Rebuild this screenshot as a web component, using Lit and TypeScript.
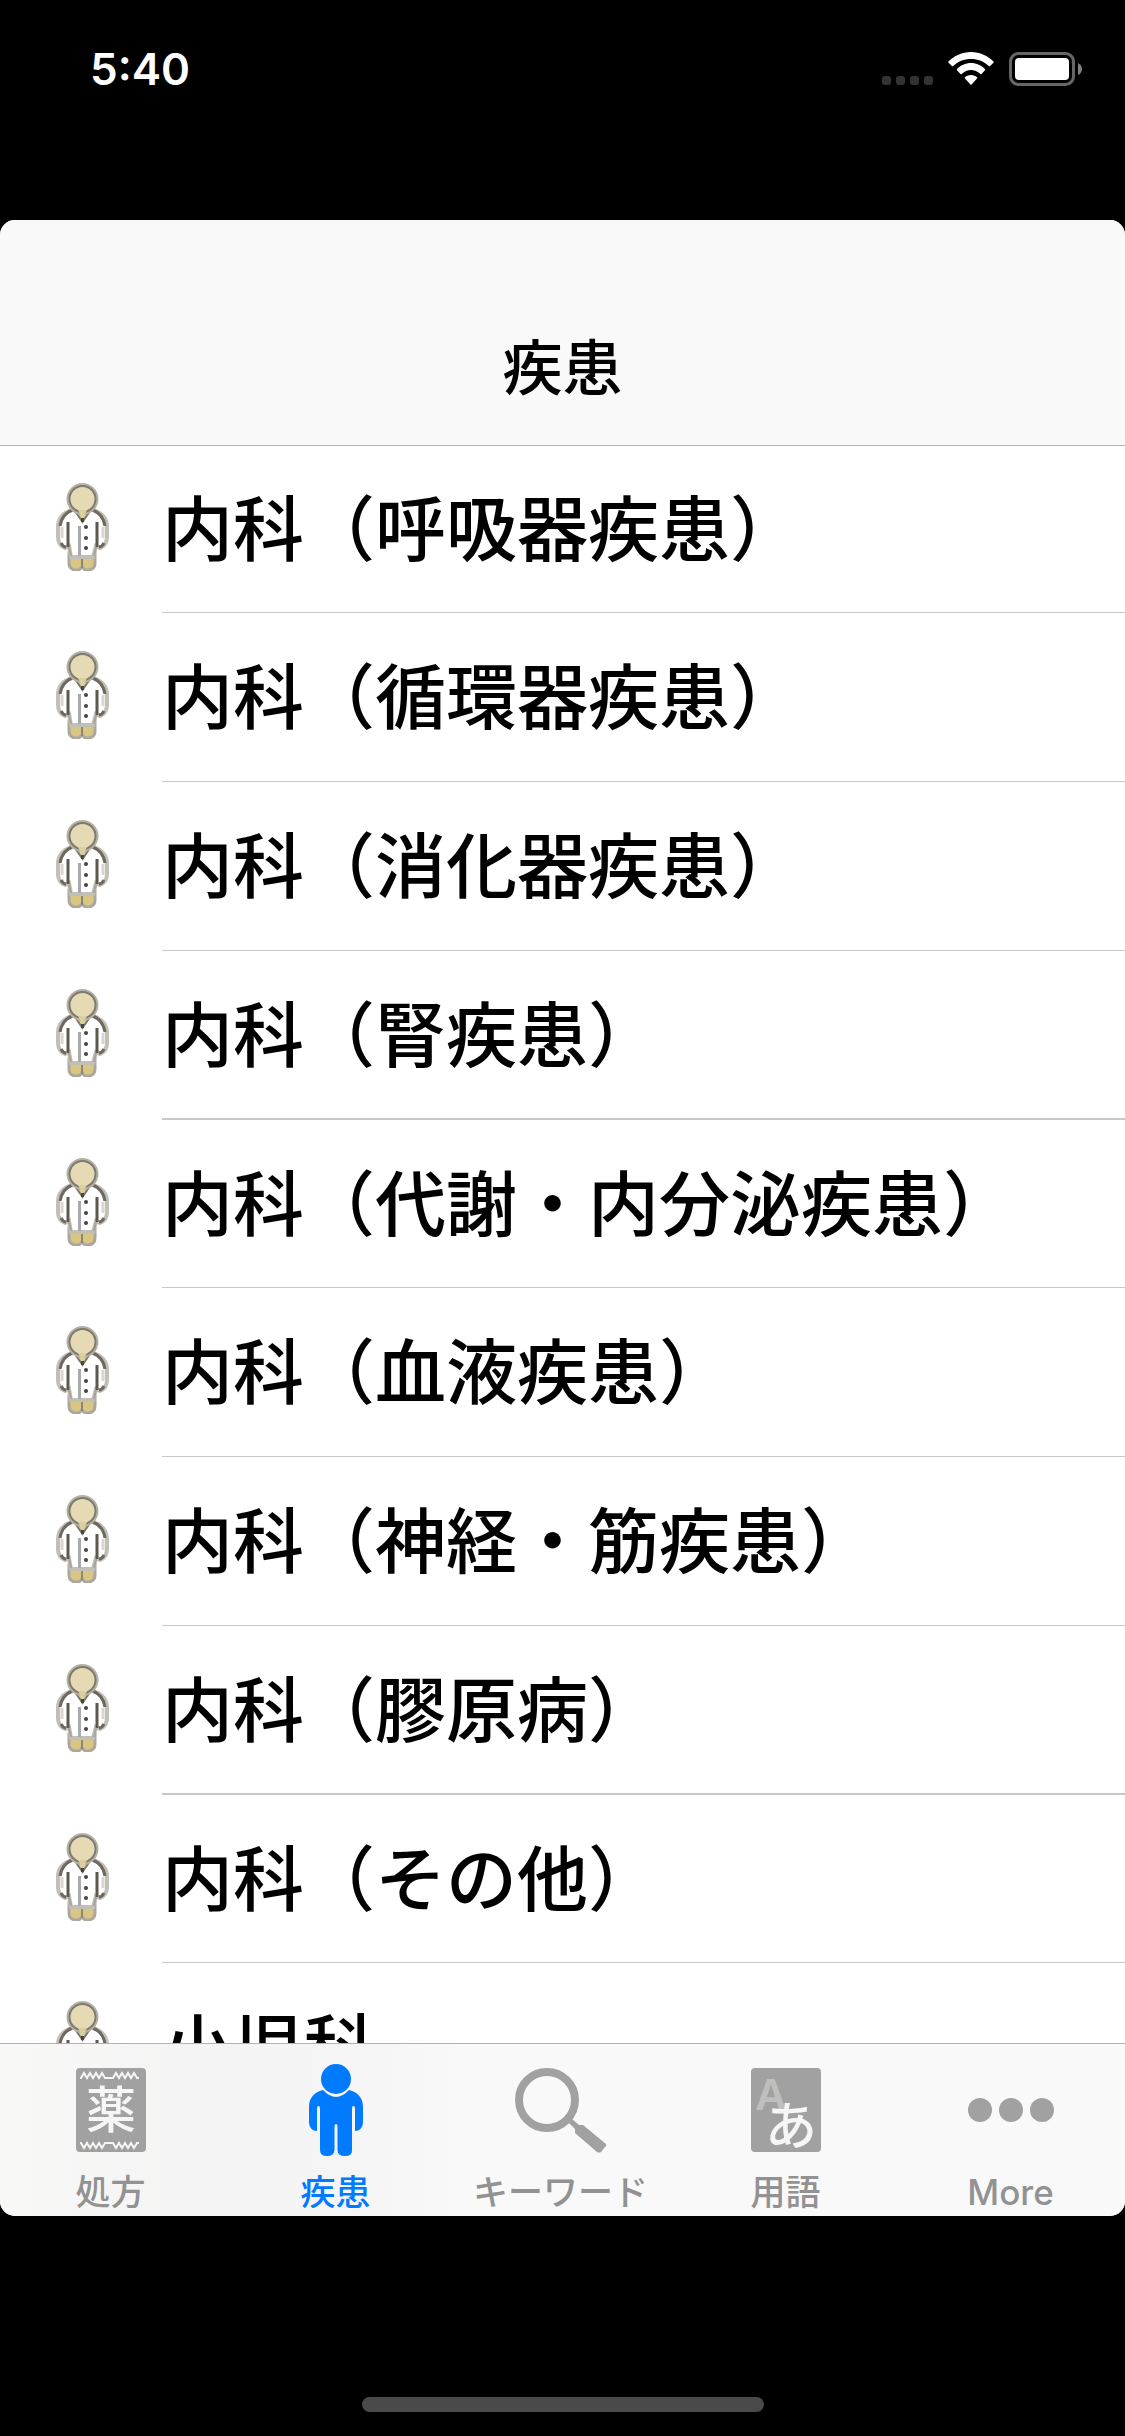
import { LitElement, css, html, svg } from 'lit'
import { customElement, property, state } from 'lit/decorators.js'
import { classMap } from 'lit/directives/class-map.js'

const categories = [
  '内科（呼吸器疾患）',
  '内科（循環器疾患）',
  '内科（消化器疾患）',
  '内科（腎疾患）',
  '内科（代謝・内分泌疾患）',
  '内科（血液疾患）',
  '内科（神経・筋疾患）',
  '内科（膠原病）',
  '内科（その他）',
  '小児科',
]

// woven edge of the medicine packet, mirrored at the bottom
const edge = (y: number, rise: number) => svg`
  <path d="M4 ${y}h1l3 ${rise} 3 ${-rise} 3 ${rise} 3 ${-rise} 3 ${rise} 3 ${-rise} 3 ${rise} 3 ${-rise}h8l3 ${rise} 3 ${-rise} 3 ${rise} 3 ${-rise} 3 ${rise} 3 ${-rise} 3 ${rise} 3 ${-rise}h2"
    fill="none" stroke="#f6f6f6" stroke-width="2"/>`

const tabs = [
  {
    id: 'prescription',
    label: '処方',
    icon: html`
      <svg class="art" width="70" height="84" viewBox="0 0 70 84" aria-hidden="true">
        <rect width="70" height="84" rx="4" fill="currentColor"/>
        ${edge(10, -5)}
        ${edge(75, 5)}
        <text x="35" y="60" class="glyph" font-size="50" text-anchor="middle">薬</text>
      </svg>`,
  },
  {
    id: 'disease',
    label: '疾患',
    icon: html`
      <svg class="art" width="54" height="92" viewBox="0 0 54 92" fill="currentColor" aria-hidden="true">
        <circle cx="27" cy="15" r="15"/>
        <path d="M14 26C5 28 0 34 0 43V58C0 63 3 67 8 67V44Q8 42 9.500 42T11 44V86Q11 92 18 92T25.500 86V63Q25.500 60 27 60T28.500 63V86Q28.500 92 36 92T43 86V44Q43 42 44.500 42T46 44V67C51 67 54 63 54 58V43C54 34 49 28 40 26Q27 40 14 26Z"/>
      </svg>`,
  },
  {
    id: 'keyword',
    label: 'キーワード',
    icon: html`
      <svg class="art" width="92" height="85" viewBox="0 0 92 85" aria-hidden="true">
        <circle cx="32" cy="32" r="28" fill="none" stroke="currentColor" stroke-width="8"/>
        <path d="M53 54L57 51L64 57H68L91 76Q92 78 90 79L86 84Q84 85 82 84L60 65V61Z" fill="currentColor"/>
      </svg>`,
  },
  {
    id: 'term',
    label: '用語',
    icon: html`
      <svg class="art" width="70" height="84" viewBox="0 0 70 84" aria-hidden="true">
        <rect width="70" height="84" rx="4" fill="currentColor"/>
        <text x="4" y="42" class="latin" font-size="44">A</text>
        <text x="40" y="77" class="glyph" font-size="52" text-anchor="middle">あ</text>
      </svg>`,
  },
  {
    id: 'more',
    label: 'More',
    icon: html`
      <svg class="art" width="86" height="84" viewBox="0 0 86 84" fill="currentColor" aria-hidden="true">
        <circle cx="12" cy="42" r="12"/>
        <circle cx="43" cy="42" r="12"/>
        <circle cx="74" cy="42" r="12"/>
      </svg>`,
  },
]

@customElement('status-bar')
export class StatusBar extends LitElement {

  static styles = css`
    :host {
      display: flex;
      justify-content: space-between;
      align-items: flex-start;
      height: 220px;
      padding: 40px 43px 0 90px;
      box-sizing: border-box;
      color: #fff;
    }

    .time {
      font: 600 44px/58px Inter, sans-serif;
    }

    .indicators {
      display: flex;
      align-items: flex-end;
      padding-top: 12px;
    }

    .signal {
      margin-right: 15px;
      margin-bottom: 1px;
    }

    .wifi {
      margin-right: 15px;
    }
  `;

  render() {
    return html`
      <time class="time">5:40</time>
      <div class="indicators">
        <svg class="signal" width="51" height="9" fill="#333" aria-hidden="true">
          <rect width="9" height="9" rx="3"/>
          <rect x="14" width="9" height="9" rx="3"/>
          <rect x="28" width="9" height="9" rx="3"/>
          <rect x="42" width="9" height="9" rx="3"/>
        </svg>
        <svg class="wifi" width="46" height="34" viewBox="0 0 46 34" fill="#fff" aria-hidden="true">
          <path d="M23 0C32 0 40 4 45.500 9.500Q46 10 45.500 10.700L42 14Q41.500 14.500 40.800 14C36 9.500 30 7 23 7S10 9.500 5.200 14Q4.500 14.500 4 14L.5 10.700Q0 10 .5 9.500C6 4 14 0 23 0Z"/>
          <path d="M23 11C28.500 11 33.500 13.500 37 17Q37.500 17.700 37 18.200L33.500 22Q33 22.500 32.300 22C29.500 19.500 26.500 18 23 18S16.500 19.500 13.700 22Q13 22.500 12.500 22L9 18.200Q8.500 17.700 9 17C12.500 13.500 17.500 11 23 11Z"/>
          <path d="M23 23C25.500 23 27.500 24 29 25.200Q29.700 25.800 29 26.500L23.600 32.500Q23 33 22.400 32.500L17 26.500Q16.300 25.800 17 25.200C18.500 24 20.500 23 23 23Z"/>
        </svg>
        <svg width="73" height="34" viewBox="0 0 73 34" aria-hidden="true">
          <rect x="1.500" y="1.500" width="63" height="31" rx="8" fill="none" stroke="#666" stroke-width="3"/>
          <rect x="6" y="6" width="54" height="22" rx="4" fill="#fff"/>
          <path d="M69 11Q73 13 73 17T69 23Z" fill="#808080"/>
        </svg>
      </div>
    `;
  }
}

@customElement('category-list')
export class CategoryList extends LitElement {

  static styles = css`
    :host {
      display: block;
      background: #fff;
    }

    .list {
      list-style: none;
      margin: 0;
      padding: 0;
    }

    .row {
      display: flex;
      align-items: stretch;
      width: 100%;
      height: 169px;
      padding: 0 0 0 56px;
      border: 0;
      background: none;
      color: #000;
      text-align: left;
      font: 500 71px/106px 'Noto Sans CJK JP', sans-serif;
    }

    .item:nth-child(4n + 1) .row {
      height: 168px;
    }

    .person {
      flex: none;
      margin: 38px 53px 0 0;
    }

    .name {
      flex: 1;
      padding: 26px 0 0;
      border-bottom: 1px solid #c8c7cc;
      white-space: nowrap;
    }

    .item:nth-child(4n) .name {
      border-bottom-width: 2px;
    }
  `;

  @property({ attribute: false })
  items: string[] = [];

  // small figure in a white coat
  private _person() {
    return html`
      <svg class="person" width="53" height="88" viewBox="0 0 53 88" aria-hidden="true">
        <path d="M13 70H39V80Q39 86 33 87H29L26 84L23 87H19Q13 86 13 80Z" fill="#d9c684" stroke="#aaa79e" stroke-width="3"/>
        <path d="M26 76V85M14 75H38" stroke="#8c8672" stroke-width="2"/>
        <path d="M16 27C7 30 2 36 2 44V54Q2 62 9 65L13 63L15 74H37L40 63L44 65Q51 62 51 54V44C51 36 46 30 37 27Z" fill="#fff" stroke="#c2bfb7" stroke-width="4"/>
        <path d="M16 27C9 30 5 36 4 43M37 27C44 30 48 36 49 43M5 60Q7 64 10 64M48 60Q46 64 43 64" fill="none" stroke="#6e685f" stroke-width="3"/>
        <path d="M6 44V55M47 44V55" fill="none" stroke="#d9d6cf" stroke-width="3"/>
        <path d="M12 39V64M41 39V64" fill="none" stroke="#5f5850" stroke-width="3"/>
        <path d="M13 64L15 73M40 64L38 73" fill="none" stroke="#a8a49b" stroke-width="2"/>
        <path d="M19 28L26.500 39L34 28" fill="#dccf9f" stroke="#7d786c" stroke-width="2"/>
        <circle cx="26.500" cy="16" r="14" fill="#e6dab5" stroke="#b5b1a6" stroke-width="4"/>
        <circle cx="26.500" cy="16" r="13" fill="#e6dab5" stroke="#7f7a6f" stroke-width="2"/>
        <path d="M22 27H31L27 35H26Z" fill="#dccf9f"/>
        <path d="M26.500 35V39" stroke="#4a453d" stroke-width="3"/>
        <path d="M23.500 43V73" stroke="#aaa" stroke-width="3"/>
        <circle cx="30" cy="44" r="2" fill="#444"/>
        <circle cx="30" cy="55" r="2" fill="#444"/>
        <circle cx="30" cy="65" r="2" fill="#444"/>
      </svg>
    `;
  }

  render() {
    return html`
      <ul class="list">
        ${this.items.map(item => html`
          <li class="item">
            <button class="row">
              ${this._person()}
              <span class="name">${item}</span>
            </button>
          </li>
        `)}
      </ul>
    `;
  }
}

@customElement('app-root')
export class AppRoot extends LitElement {

  static styles = css`
    :host {
      display: flex;
      flex-direction: column;
      height: 100vh;
      background: #000;
      font-family: Inter, 'Noto Sans CJK JP', sans-serif;
    }

    .sheet {
      flex: 1;
      min-height: 0;
      display: flex;
      flex-direction: column;
      border-radius: 15px;
      overflow: hidden;
      background: #fff;
    }

    .header {
      position: relative;
      flex: none;
      padding: 100px 0 37px;
      background: #f9f9f9;
      box-shadow: 0 1px 0 #b2b2b2;
      text-align: center;
    }

    .title {
      margin: 0;
      font: 500 60px/88px 'Noto Sans CJK JP', sans-serif;
    }

    .content {
      flex: 1;
      min-height: 0;
      overflow: hidden;
    }

    .tabs {
      flex: none;
      display: grid;
      grid-template-columns: repeat(5, 1fr);
      border-top: 1px solid #b2b2b2;
      background: linear-gradient(90deg, #f8f8f7, #f4f4f4 18%, #f5f5f5 30%, #f9f9f9 42%);
    }

    .tab {
      display: flex;
      flex-direction: column;
      align-items: center;
      height: 172px;
      padding: 20px 4px 0 0;
      border: 0;
      background: none;
      color: #a1a1a1;
      font: 500 35px/44px Inter, 'Noto Sans CJK JP', sans-serif;
    }

    .icon {
      display: flex;
      align-items: center;
      height: 92px;
      margin-bottom: 14px;
    }

    .art {
      overflow: visible;
    }

    .label {
      color: #929292;
    }

    .selected,
    .selected .label {
      color: #007aff;
    }

    .glyph {
      fill: #f6f6f6;
      font-family: 'Noto Sans CJK JP', sans-serif;
      font-weight: 500;
    }

    .latin {
      fill: #bfbfbf;
      font-family: 'Liberation Sans', sans-serif;
      font-weight: 700;
    }

    .home {
      flex: none;
      display: flex;
      justify-content: center;
      align-items: flex-end;
      height: 220px;
      padding-bottom: 24px;
      box-sizing: border-box;
    }

    .home-bar {
      width: 402px;
      height: 15px;
      border-radius: 8px;
      background: #4a4a4a;
    }
  `;

  @state()
  private _tab = 'disease';

  render() {
    return html`
      <status-bar></status-bar>
      <main class="sheet">
        <header class="header">
          <h1 class="title">疾患</h1>
        </header>
        <category-list class="content" .items=${categories}></category-list>
        <nav class="tabs">
          ${tabs.map(tab => html`
            <button
              class=${classMap({ tab: true, selected: tab.id === this._tab })}
              @click=${() => { this._tab = tab.id; }}
            >
              <span class="icon">${tab.icon}</span>
              <span class="label">${tab.label}</span>
            </button>
          `)}
        </nav>
      </main>
      <div class="home"><div class="home-bar"></div></div>
    `;
  }
}

declare global {
  interface HTMLElementTagNameMap {
    'app-root': AppRoot
    'category-list': CategoryList
    'status-bar': StatusBar
  }
}
